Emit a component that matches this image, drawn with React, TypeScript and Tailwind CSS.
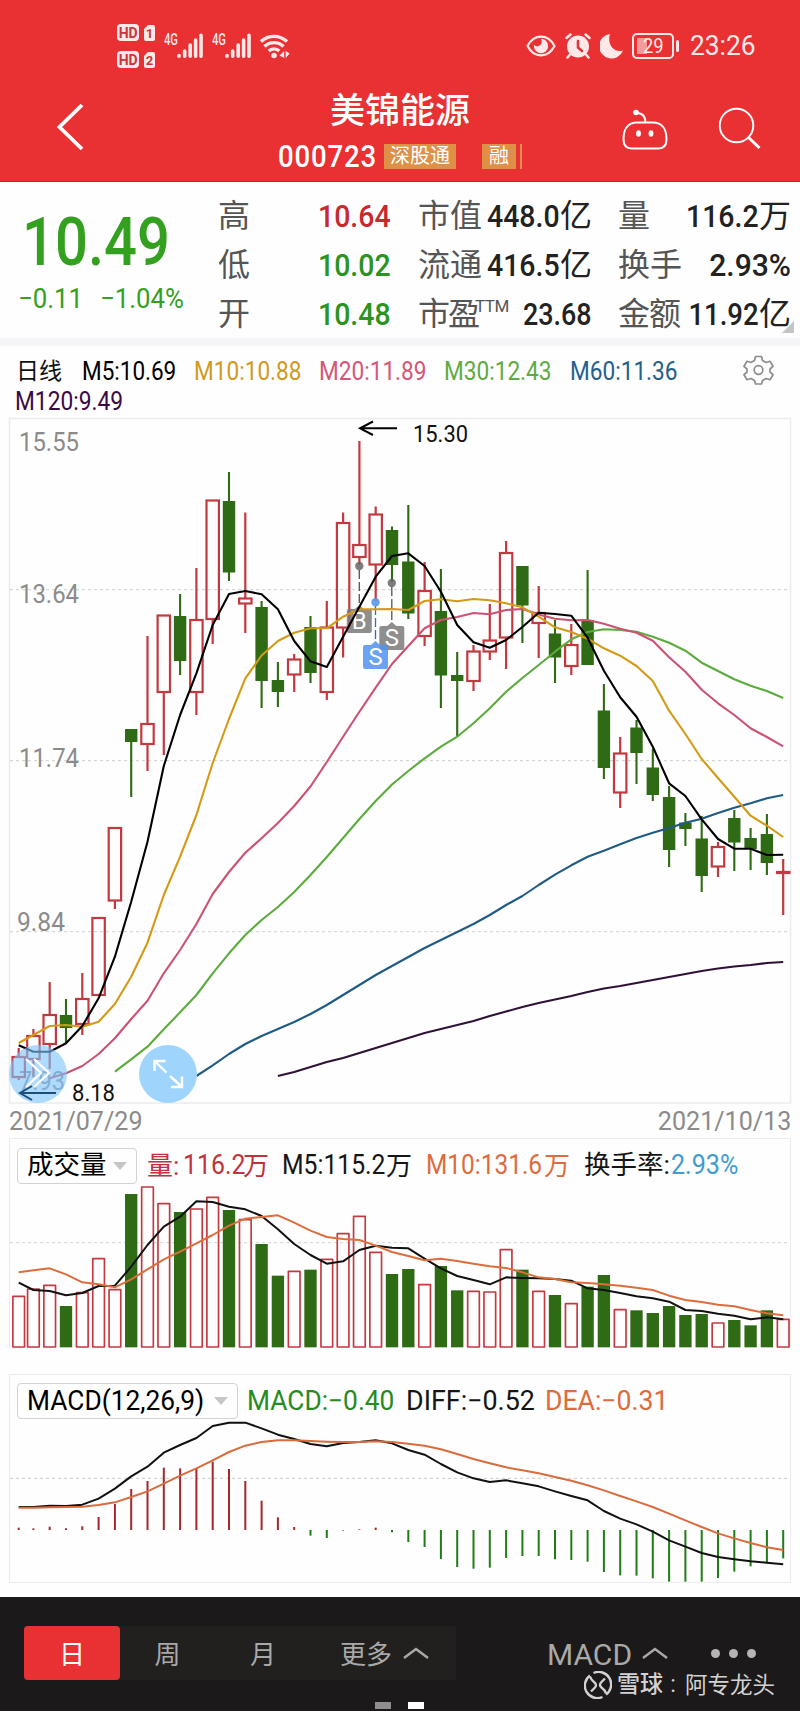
import type { ReactNode } from 'react';
import clsx from 'clsx';

// body top, body bottom, high, low, up / down
type Candle = [number, number, number, number, 'r' | 'g'];

const CANDLES: Candle[] = [
  [1057, 1077, 1048, 1080, 'r'],
  [1036, 1059, 1029, 1077, 'r'],
  [1015, 1044, 982, 1069, 'r'],
  [1015, 1028, 999, 1043, 'g'],
  [999, 1024, 973, 1035, 'r'],
  [918, 995, 918, 995, 'r'],
  [828, 900.5, 828, 909, 'r'],
  [729, 742, 729, 797, 'g'],
  [724, 744, 636, 771, 'r'],
  [615.5, 692, 615, 755, 'r'],
  [616, 661, 594, 675, 'g'],
  [620, 692, 568, 715, 'r'],
  [500.5, 619, 500, 644, 'r'],
  [501, 572.5, 472, 581, 'g'],
  [598.5, 603.5, 512.5, 633, 'r'],
  [607, 681, 601, 708, 'g'],
  [680, 692, 662, 707, 'g'],
  [659.5, 674.5, 654, 692, 'r'],
  [627, 673, 616, 683, 'g'],
  [627.5, 692, 601, 700, 'r'],
  [523, 627.5, 512.5, 657.5, 'r'],
  [545, 557, 441, 565, 'r'],
  [514.5, 564.5, 506.5, 601, 'r'],
  [530, 565, 526.5, 582, 'g'],
  [561.5, 613.5, 505, 619, 'g'],
  [591, 636, 562, 646, 'r'],
  [611, 675.5, 569, 708, 'g'],
  [675, 681, 652, 737, 'g'],
  [651.5, 681, 645, 691, 'r'],
  [640.5, 651.5, 604, 660, 'r'],
  [553, 637.5, 541, 669, 'r'],
  [566, 605.5, 566, 643, 'g'],
  [613, 623, 586, 658, 'r'],
  [633.5, 657.5, 620, 683, 'g'],
  [645, 666, 624, 675, 'r'],
  [620, 665, 570, 665, 'g'],
  [710.5, 768, 684, 779, 'g'],
  [753.5, 792.5, 737, 808, 'r'],
  [727.5, 753, 720, 784, 'g'],
  [767.5, 795, 749, 801, 'g'],
  [797, 850, 786, 867, 'g'],
  [822.5, 829, 813, 846, 'g'],
  [838.5, 876, 816, 892, 'g'],
  [847, 866.5, 842, 877, 'r'],
  [818, 842.5, 810, 871, 'g'],
  [838, 849, 828, 870, 'g'],
  [834, 863, 814, 875, 'g'],
  [872, 873, 859, 915, 'r'],
];

const M5 = [1045.3, 1051.7, 1051.7, 1043.3, 1026, 998.3, 956.7, 901.7, 841.7, 766, 715, 673.3, 625, 594, 591, 594.3, 609.3, 641, 661.3, 667, 636.7, 606.7, 576.7, 556, 553.3, 566, 591.7, 625, 642.3, 647.7, 640, 627, 612.7, 614, 615.7, 637.7, 670.7, 697.3, 716.7, 746.7, 783.3, 796, 819.3, 839, 848.7, 848.7, 855, 854.7];
const M10 = [1043, 1035, 1026, 1025, 1026.7, 1021.7, 1004, 976.7, 942.7, 895, 856.7, 815, 763, 719, 678.3, 655.5, 641, 632.7, 628.3, 628.3, 616.7, 609.3, 609.3, 609, 610, 601, 599.3, 601.3, 599, 600.3, 603.3, 607.3, 616.7, 627.3, 632, 638.7, 648.3, 655.7, 666, 681, 710.7, 734, 759, 778, 796.7, 815.7, 825.7, 837];
const M20 = [1078.3, 1073.3, 1066, 1054, 1038.3, 1019, 1000.7, 973.3, 950, 924, 894, 872, 852.7, 838.3, 823, 806, 786.5, 762, 736.7, 711.7, 687.7, 664, 646, 628.3, 620, 617, 613, 614.3, 610, 609, 614.5, 618.7, 620.3, 620, 623.7, 628.7, 632.7, 640.7, 657.3, 671.7, 689.7, 703.3, 715, 728.3, 737, 746.3];
const M30 = [1071.7, 1059.3, 1046.7, 1029.3, 1012.3, 995, 973.3, 953.3, 935, 920, 907, 892, 875, 857, 838, 819, 801, 784.5, 771, 758.3, 746.7, 736.7, 723.3, 708.3, 691.7, 678, 665, 651.7, 639.3, 632, 629.3, 630, 631.7, 636.7, 642.7, 650.7, 662.7, 671, 679.3, 685.7, 691, 698];
const M60 = [1076, 1065.3, 1054, 1044, 1036, 1029, 1022, 1014, 1005, 995, 985, 975, 966, 957, 948, 940, 932, 924, 915, 905, 896, 885, 874.7, 865.3, 856.7, 850.7, 844.3, 838, 832.7, 828, 822.7, 818.7, 813, 807.7, 803.3, 798.3, 795];
const M120 = [1076, 1072, 1067, 1062, 1058, 1053, 1048, 1043, 1038, 1033, 1029, 1025, 1021, 1016, 1011.5, 1007, 1003, 999.5, 996, 992, 988.5, 986, 983, 980, 977, 974, 971, 968.5, 966.5, 965, 963, 962];

// The two lower panels work in a 3x unit grid
const VOLUME = [498, 476, 465, 528, 487, 385, 478, 192, 170, 220, 246, 236, 201, 240, 268, 342, 437, 423, 419, 387, 310, 258, 366, 432, 417, 463, 408, 481, 483, 485, 358, 419, 483, 495, 520, 470, 435, 538, 541, 549, 528, 555, 552, 578, 570, 586, 541, 567];
const VOL_M5 = [458, 480, 483, 496, 489, 468, 467, 410, 345, 290, 260, 214, 216, 230, 238, 258, 298, 342, 375, 401, 394, 360, 347, 353, 355, 386, 415, 438, 450, 463, 442, 444, 445, 447, 452, 475, 480, 489, 499, 505, 515, 540, 543, 551, 557, 568, 562, 568];
const VOL_M10 = [427, 421, 415, 433, 457, 463, 472, 448, 418, 388, 365, 340, 315, 287, 266, 261, 256, 278, 302, 321, 327, 330, 347, 366, 378, 391, 386, 393, 401, 409, 414, 427, 442, 447, 457, 459, 463, 467, 473, 480, 497, 510, 516, 524, 529, 540, 550, 556];
const DIFF = [441, 441, 437, 438, 434, 416, 386, 349, 320, 278, 255, 234, 198, 188, 188, 205, 224, 237, 252, 259, 249, 246, 241, 250, 270, 284, 312, 337, 355, 366, 361, 370, 379, 394, 408, 421, 453, 476, 493, 515, 541, 560, 579, 591, 598, 604, 608, 613];
const DEA = [443, 443, 442, 441, 440, 435, 427, 411, 394, 371, 347, 325, 301, 276, 257, 246, 241, 241, 243, 245, 246, 246, 244, 246, 251, 257, 268, 282, 297, 310, 322, 331, 340, 351, 362, 376, 391, 408, 424, 441, 461, 481, 501, 520, 535, 549, 562, 570];
const HIST = [503, 505, 500, 505, 499, 471, 432, 387, 363, 323, 325, 325, 305, 327, 363, 422, 472, 501, 527, 534, 512, 508, 503, 517, 546, 561, 597, 621, 626, 623, 594, 588, 588, 598, 600, 605, 636, 646, 647, 655, 665, 665, 665, 654, 635, 619, 607, 595];

const RED = '#c23a40';
const GREEN = '#2f6a14';

const xAt = (i: number) => (i === 0 ? 18.7 : 17.1 + 16.3 * i);

function toPoints(values: number[], unit = 1) {
  const start = 48 - values.length;
  return values.map((y, i) => `${(xAt(start + i) * unit).toFixed(1)},${y}`).join(' ');
}

// Roboto narrowed to the proportions of a DIN face
function Din({ className, scale = 'scale-x-[.89]', right, children }: { className?: string; scale?: string; right?: boolean; children: ReactNode }) {
  return (
    <span className={clsx('flex shrink-0 whitespace-nowrap', right && 'justify-end', className)}>
      <span className={clsx('inline-block', scale, right ? 'origin-right' : 'origin-left')}>{children}</span>
    </span>
  );
}

function HdBadge({ sim }: { sim: string }) {
  return (
    <div className="flex h-[17px] items-center gap-[5px] font-bold leading-none text-[#c9353a]">
      <span className="flex h-[17px] w-[22px] items-center justify-center rounded-[4px] bg-[#ffe9e8] text-[14px] tracking-tight">HD</span>
      <svg width="11" height="16" viewBox="0 0 11 16">
        <path d="M4 0h5q2 0 2 2v12q0 2-2 2H2q-2 0-2-2V4z" fill="#ffe9e8" />
        <text x="5.500" y="12.500" fontSize="13" fill="currentColor" textAnchor="middle">{sim}</text>
      </svg>
    </div>
  );
}

function Signal() {
  return (
    <div className="flex w-[39px] text-[#ffe9e8]">
      <span className="w-[13px] text-[16px] font-medium leading-[13px]">
        <span className="inline-block origin-left scale-x-[.7]">4G</span>
      </span>
      <svg width="26" height="26" viewBox="0 0 26 26" stroke="currentColor" strokeWidth="3.600" strokeLinecap="round">
        <path d="M2 22.500v.8M7.700 18v5.300M13.200 12v11.300M18.600 7v16.300M24 2.300v21" />
      </svg>
    </div>
  );
}

function StatusBar() {
  return (
    <div className="flex h-[72px] items-start pl-[117px] text-[#ffe9e8]">
      <div className="mt-[24px] flex w-[47px] flex-col gap-[10px]">
        <HdBadge sim="1" />
        <HdBadge sim="2" />
      </div>
      <div className="mt-[33px] flex w-[362px] gap-[9px]">
        <Signal />
        <Signal />
        <svg width="30" height="26" viewBox="0 0 30 26" fill="none" stroke="currentColor" strokeWidth="3.400">
          <path d="M1 8.500a19 19 0 0 1 26 0M4.500 13.500a13.500 13.500 0 0 1 19 0M8.800 18a7.500 7.500 0 0 1 10.500 0" />
          <circle cx="14" cy="22.500" r="2.800" fill="currentColor" stroke="none" />
          <path d="M24.200 18v7l-4.700-2.500zM25.700 18v7l4-4.500z" fill="currentColor" stroke="none" />
        </svg>
      </div>
      <div className="mt-[31px] flex items-center">
        <svg width="30" height="22" viewBox="0 0 30 22" fill="none" stroke="currentColor" strokeWidth="2.200">
          <path d="M1.500 11C8-1.500 22-1.500 28.500 11C22 23.500 8 23.500 1.500 11z" />
          <path d="M15 3.800a7.200 7.200 0 1 1-7.100 6q3 3 6 .5t1.100-6.500z" fill="currentColor" stroke="none" />
        </svg>
        <svg className="ml-[9px]" width="26" height="26" viewBox="0 0 26 26">
          <circle cx="13" cy="13.500" r="11" fill="currentColor" />
          <path d="M1.500 5L5.500 1.500M24.500 5L20.500 1.500M5 21.500L2.500 24.500M21 21.500l2.500 3" stroke="currentColor" strokeWidth="2.500" strokeLinecap="round" />
          <path d="M13 8v6.500l4 3.500" fill="none" stroke="#d9363a" strokeWidth="2.600" strokeLinecap="round" />
        </svg>
        <svg className="ml-[9px]" width="24" height="26" viewBox="0 0 24 26" fill="currentColor">
          <path d="M10 1A12.300 12.300 0 1 0 23 17.500C15 20.500 6.500 12 10 1z" />
        </svg>
        <div className="relative ml-[8px] flex h-[26px] w-[42px] items-center justify-center rounded-[5px] border-2 border-current">
          <div className="absolute left-[3px] top-[3px] h-4 w-[10px] bg-[#f39a9b]" />
          <span className="relative text-[20px] leading-none">
            <span className="inline-block scale-x-[.92]">29</span>
          </span>
        </div>
        <div className="ml-[2px] h-3 w-[3px] rounded bg-current" />
        <Din className="ml-[11px] text-[28px] leading-[30px]" scale="scale-x-[.94]">23:26</Din>
      </div>
    </div>
  );
}

function Header() {
  return (
    <header className="h-[182px] border-b border-[#b8282b] bg-[#e93033] text-white">
      <StatusBar />
      <div className="flex">
        <svg className="ml-[56px] mt-[31px]" width="28" height="48" viewBox="0 0 28 48" fill="none" stroke="currentColor" strokeWidth="3.800">
          <path d="M26 2L3.500 24L26 46" />
        </svg>
        <div className="ml-[194px] w-[244px]">
          <div className="ml-[52px] mt-[18px] whitespace-nowrap text-[35px] font-medium leading-[44px]">美锦能源</div>
          <div className="mt-[8px] flex h-[28px] items-center">
            <Din className="w-[106px] text-[31px] font-medium leading-none">
              <span className="tracking-[.03em]">000723</span>
            </Din>
            <span className="flex h-[25px] w-[72px] items-center justify-center bg-[#dd9046] text-[20px] leading-none">深股通</span>
            <span className="ml-[26px] flex h-[25px] w-[34px] items-center justify-center bg-[#dd9046] text-[20px] leading-none">融</span>
            <span className="ml-[4px] h-[25px] w-[2px] bg-[#dd9046]" />
          </div>
        </div>
        <svg className="ml-[100px] mt-[36px]" width="46" height="44" viewBox="0 0 46 44" fill="none" stroke="currentColor" strokeWidth="2">
          <path d="M15 14.500h16C40 14.500 44.500 21 44.500 31q0 9.500-8 9.500H9.500q-8 0-8-9.500C1.500 21 6 14.500 15 14.500z" />
          <path d="M14.500 5q9 0 9 10" />
          <circle cx="14" cy="4.500" r="2.800" fill="currentColor" stroke="none" />
          <ellipse cx="16.500" cy="25.500" rx="2.400" ry="3.200" fill="currentColor" stroke="none" />
          <ellipse cx="29" cy="25.500" rx="2.400" ry="3.200" fill="currentColor" stroke="none" />
        </svg>
        <svg className="ml-[51px] mt-[35px]" width="42" height="43" viewBox="0 0 42 43" fill="none" stroke="currentColor" strokeWidth="2">
          <circle cx="17.500" cy="18.500" r="16.800" />
          <path d="M29.500 30.500L40.500 41" strokeWidth="3" />
        </svg>
      </div>
    </header>
  );
}

interface StatProps {
  label: ReactNode;
  value: string;
  unit?: string;
  tone?: string;
  scale?: string;
}

function Stat({ label, value, unit, tone = 'text-[#222]', scale = 'scale-x-[.89]' }: StatProps) {
  return (
    <div className="flex h-[49px] items-center justify-between whitespace-nowrap leading-none">
      <span className="text-[32px] text-[#555]">{label}</span>
      <span className={clsx('flex items-center', tone)}>
        <span className="relative flex w-0 justify-end">
          <Din right className="text-[32px] font-medium" scale={scale}>{value}</Din>
        </span>
        {unit && <span className="text-[32px]">{unit}</span>}
      </span>
    </div>
  );
}

function Quote() {
  return (
    <section className="flex h-[156px] pt-[9px]">
      <div className="w-[218px] text-[#33a01f]">
        <Din className="mt-[11px] pl-[22px] text-[67px] font-medium leading-[80px]" scale="scale-x-[.865]">10.49</Din>
        <div className="mt-px flex pl-[18px] text-[28px] leading-[32px]">
          <Din className="w-[82px]" scale="scale-x-[.92]">−0.11</Din>
          <Din scale="scale-x-[.92]">−1.04%</Din>
        </div>
      </div>
      <div className="w-[173px]">
        <Stat label="高" value="10.64" tone="text-[#c9292e]" />
        <Stat label="低" value="10.02" tone="text-[#2b9320]" />
        <Stat label="开" value="10.48" tone="text-[#2b9320]" />
      </div>
      <div className="ml-[27px] w-[174px]">
        <Stat label="市值" value="448.0" unit="亿" />
        <Stat label="流通" value="416.5" unit="亿" />
        <Stat
          label={
            <span className="flex">
              <span className="-mr-[3px] tracking-[-2px]">市盈</span>
              <span className="text-[17px] tracking-[-.5px]">TTM</span>
            </span>
          }
          value="23.68"
          scale="scale-x-[.84]"
        />
      </div>
      <div className="relative ml-[26px] w-[173px]">
        <Stat label="量" value="116.2" unit="万" />
        <Stat label="换手" value="2.93%" scale="scale-x-[.94]" />
        <Stat label={<span className="tracking-[-1px]">金额</span>} value="11.92" unit="亿" scale="scale-x-[.86]" />
        <svg className="absolute -right-[3px] bottom-[5px]" width="12" height="12" viewBox="0 0 12 12">
          <path d="M12 0v12H0z" fill="#c4c4c4" />
        </svg>
      </div>
    </section>
  );
}

function Legend() {
  return (
    <div className="flex h-[72px] text-[25px] leading-[30px]">
      <div className="w-[735px] pl-[16px] pt-[11px]">
        <div className="flex">
          <span className="w-[66px] text-[23px] text-[#111]">日线</span>
          <Din className="w-[112px] text-black" scale="scale-x-[.9]">M5:10.69</Din>
          <Din className="w-[125px] text-[#d09a1c]" scale="scale-x-[.905]">M10:10.88</Din>
          <Din className="w-[125px] text-[#d4577a]" scale="scale-x-[.905]">M20:11.89</Din>
          <Din className="w-[126px] text-[#5dab40]" scale="scale-x-[.905]">M30:12.43</Din>
          <Din className="text-[#23608c]" scale="scale-x-[.905]">M60:11.36</Din>
        </div>
        <Din className="-ml-px text-[#3a0a44]" scale="scale-x-[.91]">M120:9.49</Din>
      </div>
      <svg className="ml-[8px] mt-[9px]" width="31" height="30" viewBox="0 0 31 30" fill="none" stroke="#8d8d8d" strokeWidth="1.700" strokeLinejoin="round">
        <path d="M12.500 1.500h6l1 4 3.500 2 4-1.200 3 5-3 2.700v3l3 2.700-3 5-4-1.200-3.500 2-1 3.500h-6l-1-3.500-3.500-2-4 1.200-3-5 3-2.700v-3l-3-2.700 3-5 4 1.200 3.500-2z" />
        <circle cx="15.500" cy="15" r="4.300" />
      </svg>
    </div>
  );
}

function TradeMark({ x, y, letter, fill }: { x: number; y: number; letter: string; fill: string }) {
  return (
    <g>
      <path d={`M${x - 12.5} ${y + 4}q0-2 2-2h6l4.500-4 4.500 4h6q2 0 2 2v20q0 2-2 2h-21q-2 0-2-2z`} fill={fill} opacity=".85" />
      <text x={x} y={y + 22} fontSize="24" fill="#fff" textAnchor="middle">{letter}</text>
    </g>
  );
}

function KLineChart() {
  return (
    <svg className="overflow-visible" width="783" height="686" viewBox="9 418 783 686" fill="none" fontFamily="Roboto, sans-serif">
      <rect x="9.500" y="418.500" width="781" height="684.500" stroke="#ececee" strokeWidth="1.500" />
      <path d="M10 589.700H790M10 760.700H790M10 931.700H790" stroke="#cfcfcf" strokeDasharray="3 3" />
      <g fontSize="26" fill="#8b8b8b">
        <text x="19" y="450.500" textLength="60" lengthAdjust="spacingAndGlyphs">15.55</text>
        <text x="19" y="602.500" textLength="60" lengthAdjust="spacingAndGlyphs">13.64</text>
        <text x="19" y="767" textLength="60" lengthAdjust="spacingAndGlyphs">11.74</text>
        <text x="17" y="931" textLength="48" lengthAdjust="spacingAndGlyphs">9.84</text>
        <text x="19" y="1090" textLength="46" lengthAdjust="spacingAndGlyphs">7.93</text>
      </g>
      {CANDLES.map(([top, bottom, high, low, side], i) => {
        const x = xAt(i);
        if (side === 'g') {
          return (
            <g key={i}>
              <path d={`M${x} ${high}V${low}`} stroke={GREEN} strokeWidth="2.100" />
              <rect x={x - 6.2} y={top} width="12.4" height={bottom - top} fill={GREEN} />
            </g>
          );
        }
        return (
          <g key={i} stroke={RED} strokeWidth="2.200">
            <path d={`M${x} ${high}V${top}M${x} ${bottom}V${low}`} />
            <rect x={x - 6.2} y={top} width="12.4" height={bottom - top} />
          </g>
        );
      })}
      <path d="M359.300 570V606M391.800 587V622" stroke="#555" strokeWidth="1.300" strokeDasharray="9 3" />
      <path d="M375.500 606V640" stroke="#2f6fc0" strokeWidth="1.300" strokeDasharray="9 3" />
      <circle cx="359.300" cy="566" r="4.200" fill="#666" opacity=".85" />
      <circle cx="391.800" cy="583" r="4.200" fill="#666" opacity=".85" />
      <circle cx="375.500" cy="602.300" r="4.200" fill="#5a97e6" opacity=".9" />
      <TradeMark x={359.3} y={607} letter="B" fill="#7a7a7a" />
      <TradeMark x={391.8} y={624} letter="S" fill="#7a7a7a" />
      <TradeMark x={375.5} y={643} letter="S" fill="#4f93ee" />
      <g strokeWidth="2.100" strokeLinejoin="round">
        <polyline points={toPoints(M120)} stroke="#2f1138" />
        <polyline points={toPoints(M60)} stroke="#1f5b85" />
        <polyline points={toPoints(M30)} stroke="#5cab3d" />
        <polyline points={toPoints(M20)} stroke="#cc5272" />
        <polyline points={toPoints(M10)} stroke="#d39b15" />
        <polyline points={toPoints(M5)} stroke="#000" />
      </g>
      <path d="M397 428.300H360M373 421.500L360 428.300L373 435" stroke="#000" strokeWidth="2" />
      <text x="413" y="442" fontSize="24" fill="#111" textLength="55" lengthAdjust="spacingAndGlyphs">15.30</text>
      <circle cx="38" cy="1074" r="29" fill="#7cc4fb" opacity=".62" />
      <circle cx="168" cy="1074" r="29" fill="#9fd5fc" />
      <path d="M56 1093H20M32 1086L20 1093L32 1100" stroke="#1b4f78" strokeWidth="2" />
      <text x="72" y="1101" fontSize="24" fill="#111" textLength="43" lengthAdjust="spacingAndGlyphs">8.18</text>
      <path d="M26 1059L41 1073L26 1087M34 1059L49 1073L34 1087" stroke="#fff" strokeWidth="2.200" />
      <path d="M166.500 1072.500L155 1061.500M154.500 1071V1061H165.500M170 1076L181.500 1086.500M182 1076.500V1087H171" stroke="#fff" strokeWidth="2.400" />
    </svg>
  );
}

function VolumeChart() {
  return (
    <svg width="783" height="172" viewBox="27 138 2349 516" fill="none" strokeLinejoin="round">
      <path d="M30 338H2367" stroke="#d4d4d4" strokeWidth="3" strokeDasharray="9 9" />
      {VOLUME.map((top, i) => {
        const x = xAt(i) * 3;
        const down = CANDLES[i][4] === 'g';
        return (
          <rect
            key={i}
            x={down ? x - 18.5 : x - 17.5}
            y={down ? top : top + 1}
            width={down ? 37 : 35}
            height={652 - top - (down ? 0 : 2)}
            fill={down ? GREEN : 'none'}
            stroke={down ? 'none' : RED}
            strokeWidth="5"
          />
        );
      })}
      <polyline points={toPoints(VOL_M5, 3)} stroke="#111" strokeWidth="6" />
      <polyline points={toPoints(VOL_M10, 3)} stroke="#de6d3c" strokeWidth="6" />
    </svg>
  );
}

function MacdChart() {
  return (
    <svg width="783" height="164" viewBox="27 177 2349 492" fill="none" strokeLinejoin="round">
      <path d="M30 355H2367" stroke="#cbcbcb" strokeWidth="3" strokeDasharray="9 9" />
      {HIST.map((y, i) => (
        <path key={i} d={`M${(xAt(i) * 3).toFixed(1)} 510V${y}`} stroke={y < 510 ? '#a3272b' : '#1f7d17'} strokeWidth="6" />
      ))}
      <polyline points={toPoints(DIFF, 3)} stroke="#111" strokeWidth="6" />
      <polyline points={toPoints(DEA, 3)} stroke="#d96b3d" strokeWidth="6" />
    </svg>
  );
}

function Picker({ className, children }: { className: string; children: ReactNode }) {
  return (
    <div className={clsx('flex h-[36px] shrink-0 items-center justify-between rounded-[4px] border border-[#d3d3d3] px-[9px] text-black', className)}>
      {children}
      <svg width="14" height="8" viewBox="0 0 14 8">
        <path d="M0 0h14L7 8z" fill="#c6c6c6" />
      </svg>
    </div>
  );
}

function Caret({ className }: { className?: string }) {
  return (
    <svg className={className} width="26" height="12" viewBox="0 0 26 12" fill="none" stroke="currentColor" strokeWidth="2.400">
      <path d="M1 11L13 2L25 11" />
    </svg>
  );
}

function BottomBar() {
  return (
    <footer className="h-[114px] bg-[#1b1919] pt-[29px] text-[#a9a9a9]">
      <div className="flex h-[54px] items-center pl-[24px] text-[26px] leading-none">
        <div className="flex h-[54px] w-[432px] items-center bg-[#21201e]">
          <span className="flex h-[54px] w-[96px] items-center justify-center rounded-[4px] bg-[#e93033] pt-[3px] text-white">日</span>
          <span className="w-[95px] pt-[3px] text-center">周</span>
          <span className="w-[96px] pt-[3px] text-center">月</span>
          <span className="ml-[29px] pt-[3px]">更多</span>
          <Caret className="ml-[11px]" />
        </div>
        <span className="ml-[91px] w-[86px] pt-[3px] text-[30px]">MACD</span>
        <Caret className="ml-[9px]" />
        <div className="ml-[43px] flex gap-[9px]">
          <span className="size-[9px] rounded-full bg-[#b5b5b5]" />
          <span className="size-[9px] rounded-full bg-[#b5b5b5]" />
          <span className="size-[9px] rounded-full bg-[#b5b5b5]" />
        </div>
      </div>
      <div className="relative">
        <div className="absolute -top-[10px] left-[584px] flex items-center text-[23px] leading-[30px] text-[#d2d2d2]">
          <svg width="28" height="28" viewBox="0 0 28 28" fill="none" stroke="currentColor" strokeWidth="2.400">
            <path d="M9.500 2A12.500 12.500 0 0 1 22 23.500M18.500 26A12.500 12.500 0 0 1 6 4.500" />
            <path d="M6 5.500Q7 9 10.500 11.500Q13.500 14 10.500 17L7 20.500M22 22.500Q21 19 17.500 16.500Q14.500 14 17.500 11L21 7.500" />
          </svg>
          <span className="ml-[5px] whitespace-nowrap font-medium">雪球</span>
          <span className="w-[20px] text-center">:</span>
          <span className="ml-[2px] whitespace-nowrap text-[22.5px]">阿专龙头</span>
        </div>
      </div>
      <div className="flex gap-[17px] pl-[375px] pt-[22px]">
        <span className="h-[7px] w-4 bg-[#8e8e8e]" />
        <span className="h-[7px] w-4 bg-white" />
      </div>
    </footer>
  );
}

export default function App() {
  return (
    <div className="h-[1711px] w-[800px] overflow-hidden bg-[#fefefe] font-[Roboto,'Noto_Sans_CJK_SC',sans-serif]">
      <Header />
      <Quote />
      <div className="h-[8px] bg-[#f5f5f7]" />
      <Legend />
      <div className="h-[686px] pl-[9px]">
        <KLineChart />
      </div>
      <div className="flex h-[34px] justify-between pl-[9px] pr-[9px] pt-px text-[26px] leading-[32px] text-[#8b8b8b]">
        <Din scale="scale-x-[.965]">2021/07/29</Din>
        <Din right scale="scale-x-[.965]">2021/10/13</Din>
      </div>

      <section className="ml-[9px] h-[210px] w-[782px] border-x border-t border-[#ececee]">
        <div className="flex h-[37px] items-center pl-[7px] pt-[16px] text-[27px] leading-none">
          <Picker className="w-[120px]"><span className="text-[26.5px]">成交量</span></Picker>
          <div className="ml-[10px] flex items-center">
            <span className="flex w-[135px] items-center text-[#c0333a]">
              <span className="w-[36px] text-[26px]">量:</span>
              <Din className="w-[60px]" scale="scale-x-[.92]">116.2</Din>
              <span className="text-[26px]">万</span>
            </span>
            <span className="flex w-[144px] items-center text-[#151515]">
              <Din className="w-[104px]" scale="scale-x-[.915]">M5:115.2</Din>
              <span className="text-[26px]">万</span>
            </span>
            <span className="flex w-[158px] items-center text-[#dc6c3d]">
              <Din className="w-[118px]" scale="scale-x-[.905]">M10:131.6</Din>
              <span className="text-[26px]">万</span>
            </span>
            <span className="w-[87px] whitespace-nowrap text-[26.500px] text-[#151515]">换手率:</span>
            <Din className="text-[#3f9bd0]" scale="scale-x-[.93]">2.93%</Din>
          </div>
        </div>
        <div className="-ml-px">
          <VolumeChart />
        </div>
      </section>

      <section className="ml-[9px] mt-[26px] h-[209px] w-[782px] border border-[#ececee]">
        <div className="flex h-[44px] items-center pl-[7px] pt-[8px] text-[27px] leading-none">
          <Picker className="w-[221px]"><Din className="w-[180px]" scale="scale-x-[.975]">MACD(12,26,9)</Din></Picker>
          <Din className="ml-[9px] w-[159px] text-[#278a1d]" scale="scale-x-[.975]">MACD:−0.40</Din>
          <Din className="w-[139px] text-[#151515]" scale="scale-x-[.995]">DIFF:−0.52</Din>
          <Din className="text-[#dc6c3d]" scale="scale-x-[.985]">DEA:−0.31</Din>
        </div>
        <div className="-ml-px">
          <MacdChart />
        </div>
      </section>
      <div className="h-[14px]" />
      <BottomBar />
    </div>
  );
}
